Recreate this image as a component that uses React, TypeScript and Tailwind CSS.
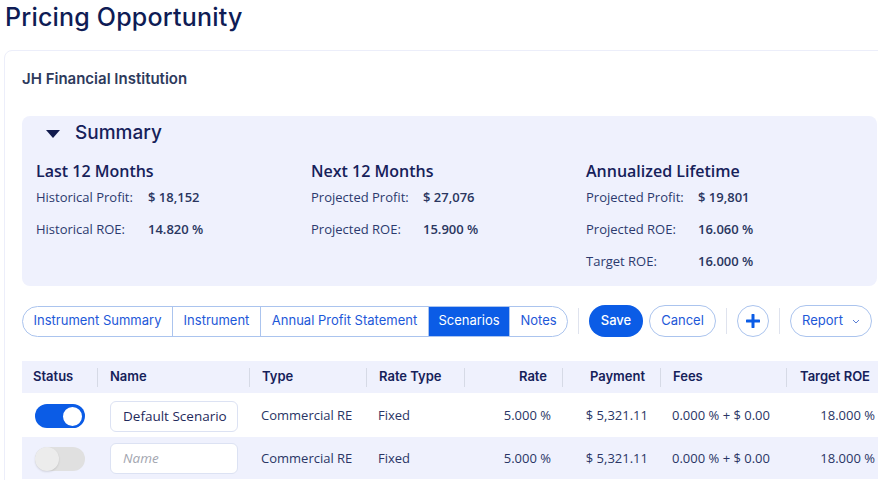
import React from "react";

const body = { fontFamily: '"Open Sans", "Noto Sans", sans-serif' };
const geo = { fontFamily: 'Inter, "Noto Sans", sans-serif' };

function Stat({ label, value }: { label: string; value: string }) {
  return (
    <div className="flex items-center h-[32px] text-[13px]">
      <div className="w-[112px] text-[#2c3a6e]">{label}</div>
      <div className="font-semibold text-[#2a365f]">{value}</div>
    </div>
  );
}

function Col({ title, rows }: { title: string; rows: [string, string][] }) {
  return (
    <div className="w-[275px] flex flex-col">
      <div className="h-[22px] flex items-center text-[16px] font-semibold text-[#16215a]">{title}</div>
      {rows.map(([l, v]) => (
        <Stat key={l} label={l} value={v} />
      ))}
    </div>
  );
}

function Sep() {
  return <div className="w-px h-[26px] bg-[#dfe3ee]" />;
}

function Toggle({ on }: { on: boolean }) {
  return on ? (
    <div className="w-[50px] h-[24px] rounded-full bg-[#0b5ce6] flex items-center justify-end pr-[1px]">
      <div className="w-[23px] h-[23px] rounded-full bg-white border-2 border-[#0b5ce6]" />
    </div>
  ) : (
    <div className="w-[50px] h-[24px] rounded-full bg-[#e0e0e0] flex items-center">
      <div className="w-[24px] h-[24px] rounded-full bg-[#ececec] shadow-[0_1px_2px_rgba(0,0,0,0.12)]" />
    </div>
  );
}

function Row({ on, name, bg }: { on: boolean; name?: string; bg: string }) {
  return (
    <div className={`flex items-center ${bg} text-[13px] text-[#2a3565]`} style={body}>
      <div className="w-[75px] pl-[13px] flex items-center">
        <Toggle on={on} />
      </div>
      <div className="w-[152px] pl-[13px]">
        <div className="w-[128px] h-[31px] rounded-[6px] border border-[#dce2f3] bg-white flex items-center pl-[12px] text-[13.5px]">
          {name ? (
            <span className="text-[#1f2a5c]">{name}</span>
          ) : (
            <span className="italic text-[#a3a6b0]">Name</span>
          )}
        </div>
      </div>
      <div className="w-[117px] pl-[12px]">Commercial RE</div>
      <div className="w-[98px] pl-[12px]">Fixed</div>
      <div className="w-[98px] pr-[11px] text-right">5.000 %</div>
      <div className="w-[98px] pr-[12px] text-right">$ 5,321.11</div>
      <div className="w-[126px] pl-[12px]">0.000 % + $ 0.00</div>
      <div className="w-[91px] pr-[2px] text-right">18.000 %</div>
    </div>
  );
}

export default function App() {
  const tabs: [string, number][] = [
    ["Instrument Summary", 149],
    ["Instrument", 88],
    ["Annual Profit Statement", 168],
    ["Scenarios", 81],
    ["Notes", 58],
  ];
  const headers: { t: string; w: number; right?: boolean; pr?: number }[] = [
    { t: "Status", w: 75 },
    { t: "Name", w: 152 },
    { t: "Type", w: 117 },
    { t: "Rate Type", w: 98 },
    { t: "Rate", w: 98, right: true, pr: 15 },
    { t: "Payment", w: 98, right: true, pr: 15 },
    { t: "Fees", w: 126 },
    { t: "Target ROE", w: 91, right: true, pr: 7 },
  ];
  return (
    <div className="w-[878px] h-[480px] overflow-hidden bg-white" style={body}>
      <div className="pl-[5px] pt-[1px] h-[50px]">
        <div className="text-[25px] font-medium text-[#0f1c55] leading-[32px] tracking-[0.2px]" style={geo}>
          Pricing Opportunity
        </div>
      </div>
      <div className="ml-[4px] w-[893px] border border-[#eceefa] rounded-[8px] px-[17px] pt-[16px] pb-[10px]">
        <div className="text-[15px] font-semibold text-[#2e3a5c] h-[24px] flex items-center" style={geo}>
          JH Financial Institution
        </div>
        <div className="mt-[25px] w-[855px] rounded-[8px] bg-[#eff1fd] pl-[14px] pb-[8px]">
          <div className="h-[35px] flex items-center">
            <svg width="14" height="8" viewBox="0 0 14 8" className="ml-[10px]">
              <path d="M0 0 L14 0 L7 8 Z" fill="#111a4d" />
            </svg>
            <span className="ml-[15px] text-[19px] font-medium text-[#16215a]" style={geo}>
              Summary
            </span>
          </div>
          <div className="mt-[9px] flex">
            <Col title="Last 12 Months" rows={[["Historical Profit:", "$ 18,152"], ["Historical ROE:", "14.820 %"]]} />
            <Col title="Next 12 Months" rows={[["Projected Profit:", "$ 27,076"], ["Projected ROE:", "15.900 %"]]} />
            <Col
              title="Annualized Lifetime"
              rows={[
                ["Projected Profit:", "$ 19,801"],
                ["Projected ROE:", "16.060 %"],
                ["Target ROE:", "16.000 %"],
              ]}
            />
          </div>
        </div>
        <div className="mt-[19px] flex items-center h-[32px] text-[13px]" style={geo}>
          <div className="flex h-[31px] rounded-full border border-[#abc4ee] overflow-hidden">
            {tabs.map(([t, w], i) => (
              <div
                key={t}
                style={{ width: w }}
                className={`flex items-center justify-center ${i > 0 ? "border-l border-[#abc4ee]" : ""} ${
                  t === "Scenarios" ? "bg-[#0b5ce6] text-white" : "text-[#1d58d8]"
                }`}
              >
                {t}
              </div>
            ))}
          </div>
          <div className="mx-[10px]"><Sep /></div>
          <div className="w-[54px] h-[32px] rounded-full bg-[#0b5ce6] text-white font-medium flex items-center justify-center">
            Save
          </div>
          <div className="ml-[6px] w-[67px] h-[32px] rounded-full border border-[#abc4ee] text-[#1d58d8] flex items-center justify-center">
            Cancel
          </div>
          <div className="mx-[10px]"><Sep /></div>
          <div className="w-[32px] h-[32px] rounded-full border border-[#abc4ee] flex items-center justify-center">
            <svg width="14" height="14" viewBox="0 0 14 14">
              <path d="M7 1 V13 M1 7 H13" stroke="#0b5ce6" strokeWidth="3" strokeLinecap="round" />
            </svg>
          </div>
          <div className="mx-[10px]"><Sep /></div>
          <div className="w-[82px] h-[32px] rounded-full border border-[#abc4ee] text-[#1d58d8] flex items-center justify-center gap-[9px]">
            <span>Report</span>
            <svg width="8" height="5" viewBox="0 0 8 5">
              <path d="M1 1 L4 4 L7 1" stroke="#5a7fd6" strokeWidth="1" fill="none" />
            </svg>
          </div>
        </div>
        <div className="mt-[24px] w-[880px]">
          <div className="flex items-center h-[32px] bg-[#eff1fd] text-[13px] font-semibold text-[#16215a]" style={geo}>
            {headers.map((h, i) => (
              <div
                key={h.t}
                style={{ width: h.w, paddingRight: h.pr }}
                className={`relative h-full flex items-center ${h.right ? "justify-end" : i === 0 ? "pl-[11px]" : "pl-[13px]"}`}
              >
                {i > 0 && <div className="absolute left-0 top-[7px] w-px h-[19px] bg-[#d6dae6]" />}
                {h.t}
              </div>
            ))}
          </div>
          <div className="h-[44px] pt-[2px] flex flex-col justify-center bg-white">
            <Row on={true} name="Default Scenario" bg="bg-white" />
          </div>
          <div className="h-[42px] pt-[1px] flex flex-col justify-center bg-[#eff1fd]">
            <Row on={false} bg="bg-[#eff1fd]" />
          </div>
        </div>
      </div>
    </div>
  );
}
